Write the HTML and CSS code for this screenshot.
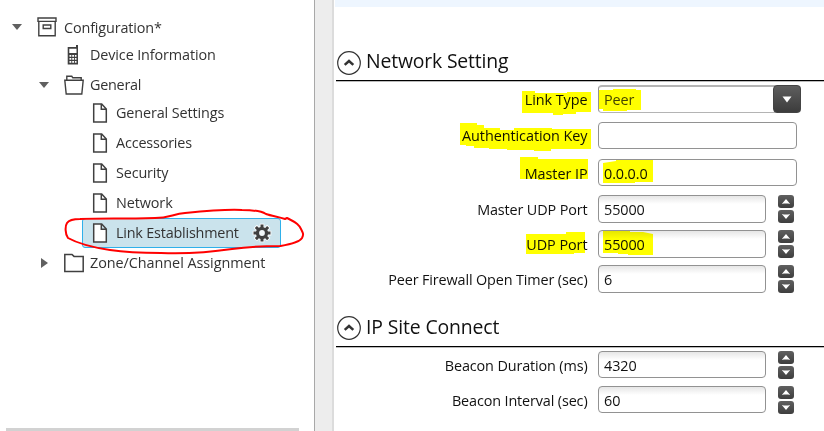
FILE: index.html
```
<!DOCTYPE html>
<html lang="en">
<head>
<meta charset="utf-8">
<title>Configuration</title>
<link rel="stylesheet" href="styles.css">
</head>
<body>
<svg width="0" height="0" class="defs">
  <symbol id="file" viewBox="0 0 16 20"><path d="M1.7 1h8l4.6 5v13H1.7zM9.3 1v5.3h5" fill="#fff" stroke="#404040" stroke-width="1.5"/></symbol>
  <symbol id="chev" viewBox="0 0 24 24"><circle cx="12" cy="12" r="11.3" fill="#fff" stroke="#333" stroke-width="1.2"/><path d="M7.7 13.9 12 10l4.3 3.9" fill="none" stroke="#333" stroke-width="2.5"/></symbol>
  <symbol id="up" viewBox="0 0 16 13"><path d="M3.8 9 8 4l4.2 5-2.2-.6H6z" fill="#fff"/></symbol>
  <symbol id="down" viewBox="0 0 16 13"><path d="M3.8 4 8 9l4.200-5-2.200.6H6z" fill="#fff"/></symbol>
</svg>
<div class="app">
  <nav class="tree">
    <div class="row root"><svg class="arrow" viewBox="0 0 10 8"><path d="M0 1h10L5 7z"/></svg>
      <svg class="icon" width="20" height="20" viewBox="0 0 20 20"><path d="M1 1h18v3.4H1zM1.8 4.4v14.3h16.4V4.4M6.2 8h7.6v3.5H6.2z" fill="#fff" stroke="#404040" stroke-width="1.4"/></svg><span class="t-config">Configuration*</span></div>
    <div class="row device"><svg class="icon" width="12" height="20" viewBox="0 0 12 20"><path d="M.7 2H9V0h2v19.500H.7z" fill="#404040"/><path d="M2.300 3.800h7.200v4.100H2.300zM2.500 10h1.800v1.700H2.500zm2.700 0H7v1.700H5.200zm2.700 0h1.600v1.700H7.900zM2.500 13h1.800v1.700H2.500zm2.700 0H7v1.700H5.200zm2.700 0h1.600v1.700H7.900zM2.500 16h1.800v1.700H2.500zm2.700 0H7v1.700H5.200zm2.700 0h1.600v1.700H7.900z" fill="#fff"/></svg><span class="t-device">Device Information</span></div>
    <div class="row branch"><svg class="arrow" viewBox="0 0 10 8"><path d="M0 1h10L5 7z"/></svg>
      <svg class="icon" width="20" height="20" viewBox="0 0 20 20"><path d="M2.800 5V1.300h5l1 1.500h8.400V5M.8 5.200h18.400L17.800 19H2.200z" fill="#fff" stroke="#404040" stroke-width="1.400"/></svg><span class="t-general">General</span></div>
    <div class="row leaf first"><svg class="file"><use href="#file"/></svg><span class="t-settings">General Settings</span></div>
    <div class="row leaf"><svg class="file"><use href="#file"/></svg><span class="t-access">Accessories</span></div>
    <div class="row leaf"><svg class="file"><use href="#file"/></svg><span class="t-security">Security</span></div>
    <div class="row leaf"><svg class="file"><use href="#file"/></svg><span class="t-network">Network</span></div>
    <div class="row leaf selected"><svg class="file"><use href="#file"/></svg><span class="t-link">Link Establishment</span>
      <svg class="gear" viewBox="-10 -10 20 20"><path d="M-1.500-8.500h3v2.700l1.700.7 1.900-1.900 2.100 2.100-1.900 1.900.7 1.600h2.500v3H6l-.7 1.600 1.900 1.900-2.100 2.100-1.900-1.900-1.700.7v2.500h-3V6l-1.700-.7-1.900 1.900-2.100-2.100 1.900-1.900L-6 1.500h-2.500v-3H-6l.7-1.600-1.900-1.900 2.100-2.100 1.900 1.900 1.700-.7z" fill="#404040" stroke="#fff" stroke-width="1.600" paint-order="stroke"/><circle r="2.900" fill="#f2f8fa"/></svg></div>
    <div class="row branch"><svg class="arrow right" viewBox="0 0 8 10"><path d="M0 0v10l7-5z"/></svg>
      <svg class="icon" width="20" height="20" viewBox="0 0 20 20"><path d="M.8 1.400H8l2 2h9.200v15.200H.8z" fill="#fff" stroke="#404040" stroke-width="1.500"/></svg><span class="t-zone">Zone/Channel Assignment</span></div>
    <div class="scrollbar"></div>
  </nav>
  <div class="splitter"></div>
  <main class="content">
    <div class="band"></div>
    <section class="network">
      <h2><svg class="chev"><use href="#chev"/></svg><span class="h-network">Network Setting</span></h2>
      <div class="field wide"><label>Link Type</label><div class="combo"><span class="v peer">Peer</span><b><svg width="10" height="7" viewBox="0 0 10 7"><path d="M.5.500h9L5 6.500z" fill="#fff"/></svg></b></div></div>
      <div class="field wide auth"><label>Authentication Key</label><div class="box long"></div></div>
      <div class="field wide last"><label>Master IP</label><div class="box long"><span class="v">0.0.0.0</span></div></div>
      <div class="field"><label class="tight">Master UDP Port</label><div class="box num"><span class="v">55000</span></div><div class="spin"><svg><use href="#up"/></svg><svg><use href="#down"/></svg></div></div>
      <div class="field"><label>UDP Port</label><div class="box num"><span class="v">55000</span></div><div class="spin"><svg><use href="#up"/></svg><svg><use href="#down"/></svg></div></div>
      <div class="field"><label class="tight">Peer Firewall Open Timer (sec)</label><div class="box num"><span class="v">6</span></div><div class="spin"><svg><use href="#up"/></svg><svg><use href="#down"/></svg></div></div>
    </section>
    <section class="site">
      <h2><svg class="chev"><use href="#chev"/></svg><span class="h-site">IP Site Connect</span></h2>
      <div class="field"><label class="tight">Beacon Duration (ms)</label><div class="box num"><span class="v">4320</span></div><div class="spin"><svg><use href="#up"/></svg><svg><use href="#down"/></svg></div></div>
      <div class="field"><label class="tight">Beacon Interval (sec)</label><div class="box num"><span class="v">60</span></div><div class="spin"><svg><use href="#up"/></svg><svg><use href="#down"/></svg></div></div>
    </section>
  </main>
</div>
<svg class="marks highlighter" viewBox="0 0 824 431">
  <g fill="#ff0">
    <path d="M522 91h13v2h32v-1h24v20h-15v2h-13v1h-10v-2h-31z"/>
    <path d="M599 90h14v-1h23v1h5v20h-14v1h-24v-2h-4z"/>
    <path d="M460 123h17v2h7v3h16v2h14v-2h38v1h39v20h-40v2h-17v-1h-27v-1h-18v-1h-15v-2h-8v-1h-6z"/>
    <path d="M520 157h18v2h50v20h-20v1h-30v-1h-18z"/>
    <path d="M603 163l13-2v-1h37v22h-18v1h-32z"/>
    <path d="M526 234h40v-2h19v21h-11v1h-48z"/>
    <path d="M603 231h27v1h13l10 2v21h-25v-1h-10v-1h-15z"/>
  </g>
</svg>
<svg class="marks" viewBox="0 0 824 431">
  <path d="M80 219c25-1 40 0 75-1 14 0 18-4 30-5 20-2 40-4 57-3 12 0 19 1 24 4 6 2 13 3 19 5l2-1 2 1c8 4 10 6 12 10 2 4 3 5 1 9-3 5-16 7-22 8-18 0-34 1-48 3-20 3-45 5-71 4-20 0-38-1-51-3-20-3-33-7-42-12-3-4-3-12-1-15 2-3 7-4 13-4z" fill="none" stroke="#f00" stroke-width="2" stroke-linejoin="round"/>
</svg>
</body>
</html>
```

FILE: styles.css
```
* { box-sizing: border-box; }
body { margin: 0; background: #fff; color: #333; font: 14.4px "Open Sans", "Noto Sans", sans-serif; overflow: hidden; }
.defs { position: absolute; }
.app { display: flex; width: 824px; height: 431px; }
svg { display: block; flex: none; }
span, label { white-space: nowrap; }

.tree { width: 314px; padding-top: 12px; display: flex; flex-direction: column; background: #fff; }
.row { height: 30px; display: flex; align-items: center; flex: none; line-height: 20px; }
.arrow { width: 10px; height: 8px; fill: #606060; }
.arrow.right { width: 8px; height: 10px; margin-left: 2px; }
.icon { margin-right: 6px; }
.root { padding-left: 12px; }
.root .icon { margin-left: 15px; }
.root span { padding-top: 2px; }
.t-config { letter-spacing: -.14px; margin-left: 1px; }
.t-general { letter-spacing: -.25px; }
.t-device, .t-settings { letter-spacing: -.12px; }
.t-access { letter-spacing: -.17px; }
.t-security { letter-spacing: -.15px; }
.t-network { letter-spacing: -.1px; }
.t-link { letter-spacing: -.2px; }
.t-zone { letter-spacing: -.05px; }
.device { padding-left: 67px; margin-top: -2px; }
.device .icon { margin-right: 11px; }
.branch { padding-left: 39px; }
.branch .icon { margin-left: 15px; }
.leaf { padding-left: 92px; }
.leaf.first { margin-top: -2px; }
.file { width: 16px; height: 20px; margin-right: 8px; }
.selected { margin: 0 33px 0 82px; padding-left: 9px; border: 1px solid #2fb0ea; border-radius: 3px; background: #cae3ec; }
.gear { width: 20px; height: 20px; margin-left: auto; margin-right: 8px; }
.scrollbar { height: 3px; margin: auto 15px 0 6px; background: #d2d2d2; }
.splitter { width: 20px; border-left: 1px solid #a8a8a8; border-right: 2px solid #dcdcdc; background: #ededed; }

.content { width: 490px; color: #111; }
.band { height: 7px; margin-left: 1px; background: #eef6ff; }
h2 { margin: 0 0 4px 2px; height: 39px; border-bottom: 1px solid #000; box-shadow: 0 1px #bbb; display: flex; font-weight: 400; font-size: 19.4px; line-height: 26px; }
h2 span { margin-top: 6px; }
.h-network { letter-spacing: -.17px; }
.h-site { letter-spacing: -.13px; }
.chev { width: 24px; height: 24px; margin: 9px 5px 0 1px; }
.network { padding-top: 35px; }
.site { padding-top: 9px; }
.site h2 { height: 38px; }
.site h2 span { margin-top: 5px; }
.site .chev { margin-top: 7px; }
.field { display: flex; height: 28px; margin-bottom: 7px; }
.field.wide { margin-bottom: 9px; }
.field.last { margin-bottom: 8px; }
label { width: 253.5px; margin-right: .5px; display: flex; justify-content: flex-end; line-height: 30px; letter-spacing: -.06px; }
.auth label { line-height: 28px; }
.tight { letter-spacing: -.13px; }
.box, .combo { margin-left: 10px; height: 27px; border: 1px solid #929292; border-radius: 4px; padding-left: 5px; line-height: 28px; }
.long { width: 199px; }
.num { width: 168px; height: 28px; background: linear-gradient(#e6e6e6, #fff 8px); }
.v { letter-spacing: -.1px; }
.peer { color: #444; }
.combo { width: 203px; height: 28px; border-top: 2px solid #b4b4b4; border-bottom-color: #b4b4b4; display: flex; line-height: 26px; }
.combo b { width: 28px; height: 28px; margin: -2px -1px 0 auto; border: 1px solid #444; border-radius: 4px; background: linear-gradient(#5e5e5e, #3c3c3c); display: flex; align-items: center; justify-content: center; }
.spin { margin-left: 12px; display: flex; flex-direction: column; gap: 2px; }
.spin svg { width: 16px; height: 13px; border-radius: 3px; background: linear-gradient(#606060, #3e3e3e); }
.site .num { height: 27px; }
.marks { position: absolute; left: 0; top: 0; width: 824px; height: 431px; pointer-events: none; }
.highlighter { mix-blend-mode: multiply; }
```
